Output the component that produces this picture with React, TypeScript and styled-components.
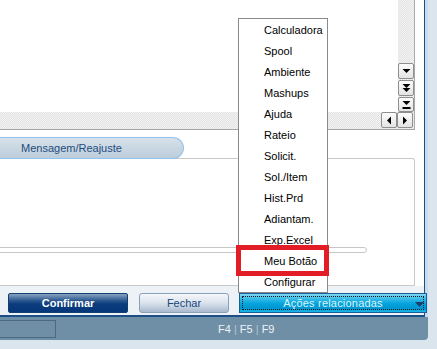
import React from 'react';
import styled, { createGlobalStyle } from 'styled-components';

const GlobalStyle = createGlobalStyle`
  html, body {
    margin: 0;
    padding: 0;
    background: #dde7ef;
  }
  * {
    box-sizing: border-box;
  }
`;

const menuItems = [
  'Calculadora',
  'Spool',
  'Ambiente',
  'Mashups',
  'Ajuda',
  'Rateio',
  'Solicit.',
  'Sol./Item',
  'Hist.Prd',
  'Adiantam.',
  'Exp.Excel',
  'Meu Botão',
  'Configurar',
];

const dotted = `repeating-conic-gradient(#e2e2e2 0 25%, #f4f4f4 0 50%) 0 0 / 2px 2px`;

const Page = styled.div`
  position: relative;
  width: 437px;
  height: 349px;
  overflow: hidden;
  background: #dbe5ed;
  font-family: 'Liberation Sans', Arial, sans-serif;
  font-size: 11px;
`;

const Window = styled.div`
  width: 428px;
  height: 340px;
  display: flex;
  flex-direction: column;
  background: #c8dcef;
  border-bottom-right-radius: 4px;
`;

const Client = styled.div`
  width: 425px;
  height: 317px;
  display: flex;
  flex-direction: column;
  background: #fff;
  border-right: 1px solid #1d4f87;
  border-bottom: 2px solid #1d4f87;
`;

const Grid = styled.div`
  width: 415px;
  height: 130px;
  flex: none;
  display: grid;
  grid-template-columns: 1fr 16px;
  grid-template-rows: 112px 17px;
  border-right: 1px solid #a9a9a9;
  border-bottom: 1px solid #a5a5a5;
`;

const VScroll = styled.div`
  display: flex;
  flex-direction: column;
  justify-content: flex-end;
  gap: 1px;
  background: ${dotted};
`;

const HScroll = styled.div`
  grid-column: 1 / span 2;
  display: flex;
  align-items: flex-start;
  background: ${dotted};
  padding-left: 381px;
`;

const ScrollBtn = styled.div<{ $h?: number }>`
  width: 16px;
  height: ${(p) => p.$h ?? 15}px;
  display: flex;
  align-items: center;
  justify-content: center;
  border: 1px solid #8e8e8e;
  border-radius: 2px;
  background: linear-gradient(#fdfdfd, #e3e3e3);
`;

const TabRow = styled.div`
  margin-top: 7px;
  height: 22px;
  flex: none;
  display: flex;
  position: relative;
  z-index: 1;
  margin-bottom: -1px;
`;

const Tab = styled.div`
  width: 184px;
  height: 22px;
  padding-left: 21px;
  display: flex;
  align-items: center;
  color: #1f4d80;
  border: 1px solid #98c1ee;
  border-left: none;
  border-radius: 0 11px 11px 0;
  background: linear-gradient(#d6e1ea, #bccddb);
`;

const Panel = styled.div`
  width: 415px;
  height: 128px;
  flex: none;
  border: 1px solid #c9c9c9;
  border-left: none;
  border-top-right-radius: 3px;
  padding-top: 88px;
`;

const Track = styled.div`
  width: 378px;
  height: 6px;
  margin-left: -11px;
  border: 1px solid #c6c6c6;
  border-radius: 3px;
  background: #fff;
`;

const ButtonBar = styled.div`
  flex: 1;
  display: flex;
  align-items: flex-start;
  padding: 7px 0 0 8px;
  gap: 11px;
  background: #edf2f7;
`;

const Button = styled.div<{ $kind: 'primary' | 'plain' | 'actions'; $w: number }>`
  position: relative;
  width: ${(p) => p.$w}px;
  height: 20px;
  flex: none;
  display: flex;
  align-items: center;
  justify-content: center;
  border-radius: 2px;
  font-size: 11px;
  ${(p) =>
    p.$kind === 'primary'
      ? `
    color: #fff;
    font-weight: bold;
    border: 1px solid #123e70;
    background: linear-gradient(#8aa3c2 0%, #2f5b91 35%, #0b3d7e 55%, #063679 100%);
  `
      : p.$kind === 'plain'
      ? `
    color: #17477b;
    border: 1px solid #8ba1b9;
    border-radius: 3px;
    background: linear-gradient(#f6f8fb 0%, #d9e2ec 50%, #a8bace 100%);
  `
      : `
    margin-left: -1px;
    color: #dcf3fb;
    letter-spacing: 0.2px;
    border: 1px solid #1b5d98;
    border-radius: 0;
    background: linear-gradient(#84d9f2 0%, #2fb8e6 30%, #03a3dc 55%, #0096d2 80%, #1ab8e8 100%);
    outline: 1px dotted #101820;
    outline-offset: -4px;
  `}
`;

const Caret = styled.svg`
  position: absolute;
  right: 2px;
  top: 8px;
`;

const StatusBar = styled.div`
  height: 23px;
  flex: none;
  display: flex;
  align-items: center;
  background: #6f8fa6;
  border-bottom-right-radius: 4px;
  color: #eef3f7;
  font-size: 11px;
`;

const StatusBox = styled.div`
  width: 56px;
  height: 18px;
  border: 1px solid #4b6a82;
  border-left: none;
`;

const Keys = styled.div`
  margin-left: 162px;
  span {
    color: #b3c4d2;
  }
`;

const Menu = styled.div`
  position: absolute;
  left: 238px;
  top: 18px;
  width: 90px;
  display: flex;
  flex-direction: column;
  background: #fff;
  border: 1px solid #8a8a8a;
  z-index: 5;
`;

const MenuItem = styled.div`
  height: 21px;
  padding-left: 25px;
  display: flex;
  align-items: center;
  color: #000;
  white-space: nowrap;
`;

const Highlight = styled.div`
  position: absolute;
  left: 236px;
  top: 245px;
  width: 93px;
  height: 31px;
  border: 5px solid #e31d25;
  z-index: 6;
`;

const Arrow = ({ dir }: { dir: 'down' | 'down2' | 'end' | 'left' | 'right' }) => {
  if (dir === 'left')
    return (
      <svg width="8" height="9" viewBox="0 0 8 9">
        <path d="M2 4.5 L6 0.5 V8.5 Z" fill="#000" />
      </svg>
    );
  if (dir === 'right')
    return (
      <svg width="8" height="9" viewBox="0 0 8 9">
        <path d="M6 4.5 L2 0.5 V8.5 Z" fill="#000" />
      </svg>
    );
  if (dir === 'down2')
    return (
      <svg width="9" height="10" viewBox="0 0 9 10">
        <path d="M0.5 1 H8.5 L4.5 5 Z M0.5 5 H8.5 L4.5 9 Z" fill="#000" />
      </svg>
    );
  if (dir === 'end')
    return (
      <svg width="9" height="10" viewBox="0 0 9 10">
        <path d="M0.5 1 H8.5 L4.5 5 Z" fill="#000" />
        <rect x="0.5" y="7" width="8" height="2" fill="#000" />
      </svg>
    );
  return (
    <svg width="9" height="6" viewBox="0 0 9 6">
      <path d="M0.5 1 H8.5 L4.5 5 Z" fill="#000" />
    </svg>
  );
};

export default function App() {
  return (
    <Page>
      <GlobalStyle />
      <Window>
        <Client>
          <Grid>
            <div />
            <VScroll>
              <ScrollBtn $h={16}>
                <Arrow dir="down" />
              </ScrollBtn>
              <ScrollBtn $h={16}>
                <Arrow dir="down2" />
              </ScrollBtn>
              <ScrollBtn>
                <Arrow dir="end" />
              </ScrollBtn>
            </VScroll>
            <HScroll>
              <ScrollBtn $h={16}>
                <Arrow dir="left" />
              </ScrollBtn>
              <ScrollBtn $h={16}>
                <Arrow dir="right" />
              </ScrollBtn>
            </HScroll>
          </Grid>
          <TabRow>
            <Tab>Mensagem/Reajuste</Tab>
          </TabRow>
          <Panel>
            <Track />
          </Panel>
          <ButtonBar>
            <Button $kind="primary" $w={120}>
              Confirmar
            </Button>
            <Button $kind="plain" $w={90}>
              Fechar
            </Button>
            <Button $kind="actions" $w={188}>
              Ações relacionadas
              <Caret width="9" height="5" viewBox="0 0 9 5">
                <path d="M0 0 H9 L4.5 5 Z" fill="#1a3d6b" />
              </Caret>
            </Button>
          </ButtonBar>
        </Client>
        <StatusBar>
          <StatusBox />
          <Keys>
            F4 <span>|</span> F5 <span>|</span> F9
          </Keys>
        </StatusBar>
      </Window>
      <Menu>
        {menuItems.map((item) => (
          <MenuItem key={item}>{item}</MenuItem>
        ))}
      </Menu>
      <Highlight />
    </Page>
  );
}
